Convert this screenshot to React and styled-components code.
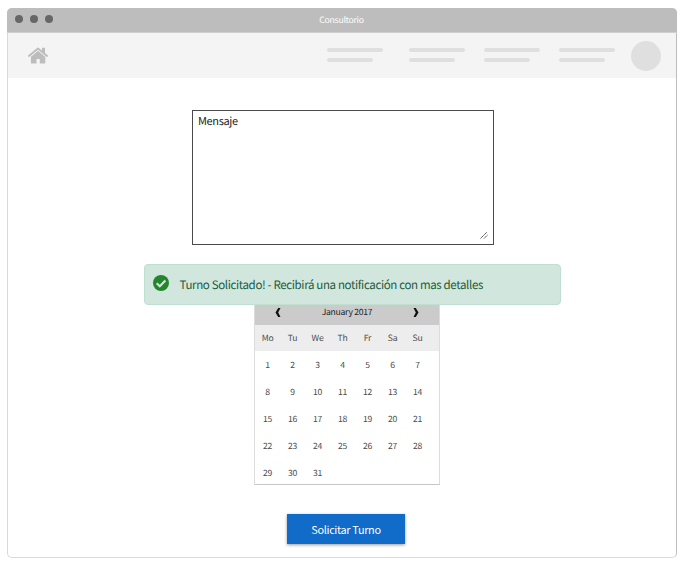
import React from "react";
import styled, { createGlobalStyle } from "styled-components";

const GlobalStyle = createGlobalStyle`
  * { box-sizing: border-box; }
  body {
    margin: 0;
    background: #fff;
    font-family: "Noto Sans CJK SC", "Noto Sans", sans-serif;
    text-rendering: geometricPrecision;
  }
`;

const Page = styled.div`
  width: 691px;
  height: 566px;
  padding: 8px 14px 7px 7px;
  overflow: hidden;
`;

const Window = styled.div`
  height: 550px;
  border: 1px solid #d9d9d9;
  border-top: 0;
  border-right-color: #bdbdbd;
  border-radius: 5px;
  background: #fff;
`;

const TitleBar = styled.header`
  display: grid;
  grid-template-columns: 1fr auto 1fr;
  align-items: center;
  height: 25px;
  margin: 0 -1px;
  padding: 0 9px 0 8px;
  border-radius: 5px 5px 0 0;
  border-bottom: 1px solid #cfcfcf;
  background: #bdbdbd;
`;

const Dots = styled.div`
  display: flex;
  gap: 7px;
  margin-top: -2px;
`;

const Dot = styled.span`
  width: 8px;
  height: 8px;
  border-radius: 50%;
  background: #676767;
`;

const Title = styled.span`
  color: #fff;
  font-size: 8.7px;
  letter-spacing: -0.031em;
  line-height: 12px;
`;

const Nav = styled.nav`
  display: flex;
  align-items: center;
  height: 45px;
  padding: 0 15px 0 20px;
  background: #f4f4f4;
`;

const HomeSvg = styled.svg`
  display: block;
  width: 20px;
  height: 17px;
  margin-right: auto;
`;

const Link = styled.div`
  display: flex;
  flex-direction: column;
  gap: 6px;
  width: 56px;
  margin: -1px ${(p) => p.$gap}px 0 0;
`;

const Line = styled.span`
  width: ${(p) => p.$width}px;
  height: 4px;
  border-radius: 2px;
  background: #dfdfdf;
`;

const Avatar = styled.div`
  width: 30px;
  height: 30px;
  border-radius: 50%;
  background: #dfdfdf;
`;

const Form = styled.main`
  position: relative;
  display: flex;
  flex-direction: column;
  align-items: flex-start;
`;

const Message = styled.div`
  display: flex;
  justify-content: space-between;
  width: 302px;
  height: 135px;
  margin: 32px 0 0 184px;
  padding: 2px 5px 5px 5px;
  border: 1px solid #4a4a4a;
  color: #222;
  font-size: 11px;
  letter-spacing: -0.031em;
  line-height: 16px;
`;

const Grip = styled.svg`
  align-self: flex-end;
  width: 8px;
  height: 8px;
`;

const Toast = styled.div`
  position: absolute;
  top: 186px;
  left: 136px;
  display: flex;
  align-items: center;
  width: 417px;
  height: 41px;
  padding: 0 9px 0 8px;
  border: 1px solid #bfdfd0;
  border-radius: 4px;
  background: #d1e7dd;
  color: #1c5c40;
  font-size: 11.5px;
  letter-spacing: -0.031em;
  line-height: 16px;
`;

const CheckSvg = styled.svg`
  flex: none;
  width: 16px;
  height: 16px;
  margin: -3px 10.5px 0 0;
`;

const Calendar = styled.section`
  width: 186px;
  height: 187px;
  margin: 53px 0 0 246px;
  border: 1px solid #c6c6c6;
  border-left-color: #dcdcdc;
  border-right-color: #dcdcdc;
  color: #4c4c4c;
  font-size: 8.6px;
  letter-spacing: -0.031em;
  line-height: 12px;
`;

const Month = styled.div`
  display: flex;
  align-items: center;
  justify-content: space-between;
  height: 26px;
  padding: 0 20px;
  background: #cbcbcb;
  color: #222;
`;

const Arrow = styled.svg`
  width: 6px;
  height: 9px;
`;

const Week = styled.div`
  display: grid;
  grid-template-columns: repeat(7, 25px);
  align-items: center;
  justify-items: center;
  height: ${(p) => (p.$head ? 26 : 27)}px;
  background: ${(p) => (p.$head ? "#ededed" : "transparent")};
`;

const Submit = styled.button`
  width: 118px;
  height: 30px;
  margin: 29px 0 0 279px;
  padding: 0;
  border: 0;
  background: #116bc9;
  box-shadow: 0 1px 3px rgba(0, 0, 0, 0.4);
  color: #fff;
  font: 10.9px/16px "Noto Sans CJK SC", "Noto Sans", sans-serif;
  letter-spacing: -0.031em;
`;

const weekdays = ["Mo", "Tu", "We", "Th", "Fr", "Sa", "Su"];
const weeks = [0, 7, 14, 21, 28].map((start) =>
  Array.from({ length: 7 }, (_, i) => start + i + 1).filter((d) => d <= 31)
);
const linkGaps = [26, 19, 19, 16];

export default function App() {
  return (
    <Page>
      <GlobalStyle />
      <Window>
        <TitleBar>
          <Dots><Dot /><Dot /><Dot /></Dots>
          <Title>Consultorio</Title>
        </TitleBar>
        <Nav>
          <HomeSvg viewBox="0 0 20 17" fill="none">
            <path d="M10 3.6 17.3 9.4V15.7Q17.3 16.6 16.4 16.6H11.8V12H8.5V16.6H3.8Q2.9 16.6 2.9 15.7V9.4Z" fill="#bdbdbd" />
            <path d="M14 .8H17V7L14 4.5Z" fill="#bdbdbd" />
            <path d="M2 9.9 10 3.4 18 9.9" stroke="#f4f4f4" strokeWidth=".9" />
            <path d="M.9 9 10 1.6 19.1 9" stroke="#bdbdbd" strokeWidth="1.9" strokeLinecap="round" strokeLinejoin="round" />
          </HomeSvg>
          {linkGaps.map((gap, i) => (
            <Link key={i} $gap={gap}>
              <Line $width={56} />
              <Line $width={46} />
            </Link>
          ))}
          <Avatar />
        </Nav>
        <Form>
          <Message>
            Mensaje
            <Grip viewBox="0 0 8 8" stroke="#444" strokeWidth=".9">
              <path d="M.5 7.5 7 1M4 7.5 7.5 4" strokeDasharray="1.8 .3" />
            </Grip>
          </Message>
          <Calendar>
            <Month>
              <Arrow viewBox="0 0 6 9" fill="#111"><path d="M3.2 0H5.5L3.2 4.5 5.5 9H3.2L.5 4.5Z" /></Arrow>
              January 2017
              <Arrow viewBox="0 0 6 9" fill="#111"><path d="M2.8 0H.5L2.8 4.5.5 9H2.8L5.5 4.5Z" /></Arrow>
            </Month>
            <Week $head>{weekdays.map((d) => <span key={d}>{d}</span>)}</Week>
            {weeks.map((days) => (
              <Week key={days[0]}>{days.map((d) => <span key={d}>{d}</span>)}</Week>
            ))}
          </Calendar>
          <Submit type="button">Solicitar Turno</Submit>
          <Toast role="status">
            <CheckSvg viewBox="0 0 16 16">
              <circle cx="8" cy="8" r="8" fill="#25852a" />
              <path d="M3.7 8.2 6.8 11.2 12.4 5.5" fill="none" stroke="#d1e7dd" strokeWidth="2.2" />
            </CheckSvg>
            Turno Solicitado! - Recibirá una notificación con mas detalles
          </Toast>
        </Form>
      </Window>
    </Page>
  );
}
